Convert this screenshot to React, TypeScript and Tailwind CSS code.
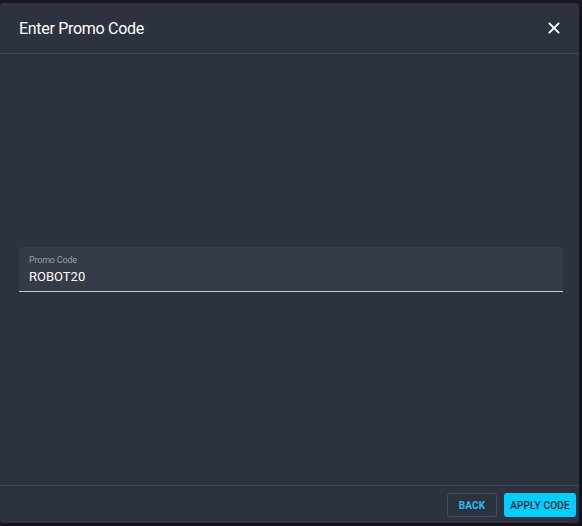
import React, { useState } from 'react';

const PromoCodeDialog: React.FC = () => {
  const [code, setCode] = useState<string>('ROBOT20');

  return (
    <div className="w-[579px] h-[520px] bg-[#2c323e] rounded-[3px] flex flex-col shadow-lg">
      {/* header */}
      <div className="h-[51px] flex items-center justify-between pl-[19px] pr-[15px] border-b border-[#414754]">
        <h2 className="text-[16px] text-white tracking-[-0.3px] pt-[2px]">Enter Promo Code</h2>
        <button className="text-white w-5 h-5 flex items-center justify-center">
          <svg className="w-[12px] h-[12px]" viewBox="0 0 14 14" fill="none" stroke="currentColor" strokeWidth={2.2}>
            <path d="M1 1l12 12M13 1L1 13" />
          </svg>
        </button>
      </div>

      {/* body */}
      <div className="flex-1 flex items-center pl-[19px] pr-[16px]">
        <label className="w-full bg-[#343a46] rounded-t-[3px] border-b border-[#c7cad0] px-[10px] pt-[8px] pb-[5px] flex flex-col">
          <span className="text-[9px] leading-[11px] text-[#9aa0aa] tracking-[-0.2px]">Promo Code</span>
          <input
            value={code}
            onChange={e => setCode(e.target.value)}
            className="bg-transparent outline-none text-white text-[13px] leading-[18px] mt-[2px]"
          />
        </label>
      </div>

      {/* footer */}
      <div className="h-[38px] border-t border-[#414754] flex items-start justify-end gap-[7px] pt-[7px] pr-[3px]">
        <button className="h-[24px] w-[50px] rounded-[3px] border border-[#474d59] text-[#23c0ee] text-[10px] font-bold tracking-[0.2px]">
          BACK
        </button>
        <button className="h-[24px] w-[72px] rounded-[3px] bg-[#00cfff] text-[#1c2430] text-[10px] font-medium tracking-[0.2px]">
          APPLY CODE
        </button>
      </div>
    </div>
  );
};

export default function App() {
  return (
    <div className="min-h-[526px] bg-[#16181d] pt-[3px]" style={{ fontFamily: 'Roboto, "Noto Sans", sans-serif' }}>
      <PromoCodeDialog />
    </div>
  );
}
